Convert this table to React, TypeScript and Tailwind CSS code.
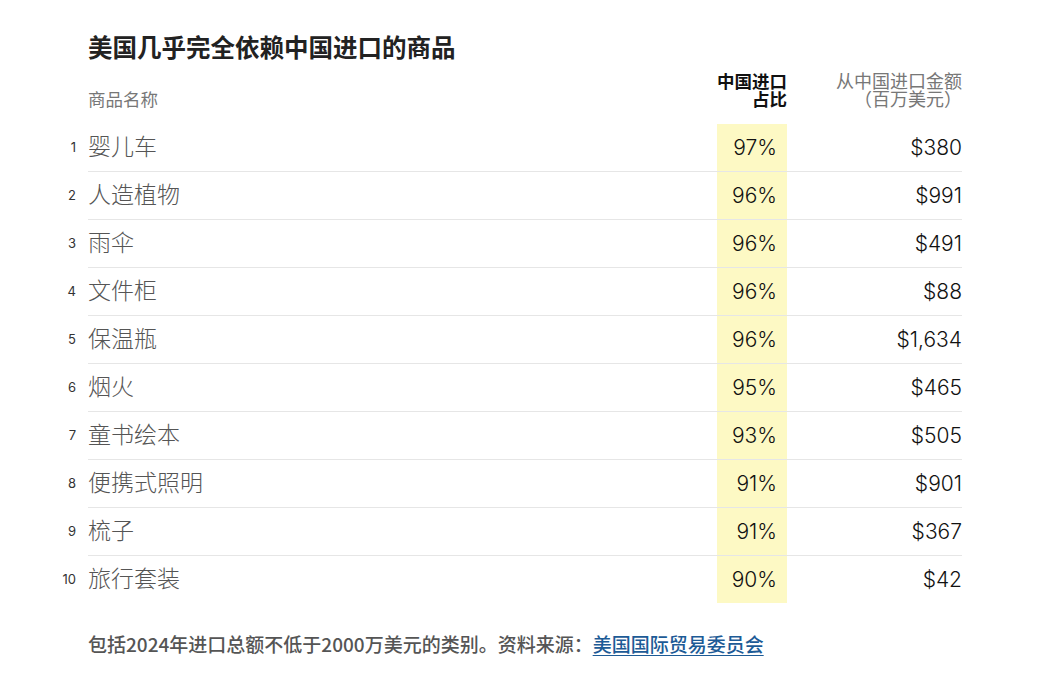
import React from "react";

const rows = [
  { name: "婴儿车", pct: "97%", amount: "$380" },
  { name: "人造植物", pct: "96%", amount: "$991" },
  { name: "雨伞", pct: "96%", amount: "$491" },
  { name: "文件柜", pct: "96%", amount: "$88" },
  { name: "保温瓶", pct: "96%", amount: "$1,634" },
  { name: "烟火", pct: "95%", amount: "$465" },
  { name: "童书绘本", pct: "93%", amount: "$505" },
  { name: "便携式照明", pct: "91%", amount: "$901" },
  { name: "梳子", pct: "91%", amount: "$367" },
  { name: "旅行套装", pct: "90%", amount: "$42" },
];

const cjk = { fontFamily: '"Inter", "Noto Sans CJK SC", sans-serif' };
const cjkFirst = { fontFamily: '"Noto Sans CJK SC", sans-serif' };

export default function App() {
  return (
    <div className="min-h-[697px] w-[1050px] bg-white text-[#222]" style={cjk}>
      <div className="w-[962px] pl-[60px] pt-[33px]">
        <h1 className="ml-[28px] text-[24.5px] font-bold leading-[30px] text-[#222]">
          美国几乎完全依赖中国进口的商品
        </h1>

        {/* header */}
        <div className="mt-[10px] flex items-end pb-[15px]">
          <div className="w-[28px]" />
          <div className="flex flex-1 items-end">
            <div className="flex-1 text-[17.5px] leading-[18px] text-[#777]">商品名称</div>
            <div className="w-[70px] text-right text-[17.5px] font-bold leading-[18px] text-[#111]">
              中国进口
              <br />
              占比
            </div>
            <div className="w-[175px] text-right text-[18px] leading-[18px] text-[#777]">
              从中国进口金额
              <br />
              （百万美元）
            </div>
          </div>
        </div>

        {/* rows */}
        {rows.map((r, i) => {
          const last = i === rows.length - 1;
          return (
            <div key={r.name} className={`flex ${last ? "h-[47px]" : "h-[48px]"}`}>
              <div className="flex w-[28px] items-center justify-end pr-[12px] text-[13px] text-[#333]">
                {i + 1}
              </div>
              <div
                className={`flex flex-1 items-stretch ${last ? "" : "border-b border-[#e6e6e6]"}`}
              >
                <div className="flex flex-1 items-center text-[23px] font-light text-[#555]">
                  {r.name}
                </div>
                <div className="flex w-[70px] items-center justify-end bg-[#fdf9c4] pr-[10px] text-[21px] font-light text-[#111]">
                  {r.pct}
                </div>
                <div className="flex w-[175px] items-center justify-end text-[21px] font-light text-[#111]">
                  {r.amount}
                </div>
              </div>
            </div>
          );
        })}

        {/* footer */}
        <p
          className="ml-[28px] mt-[27px] text-[19px] font-medium leading-[28px] text-[#555]"
          style={cjkFirst}
        >
          包括2024年进口总额不低于2000万美元的类别。资料来源：
          <a href="#" className="text-[#1d5b96] underline underline-offset-[3px]">
            美国国际贸易委员会
          </a>
        </p>
      </div>
    </div>
  );
}
